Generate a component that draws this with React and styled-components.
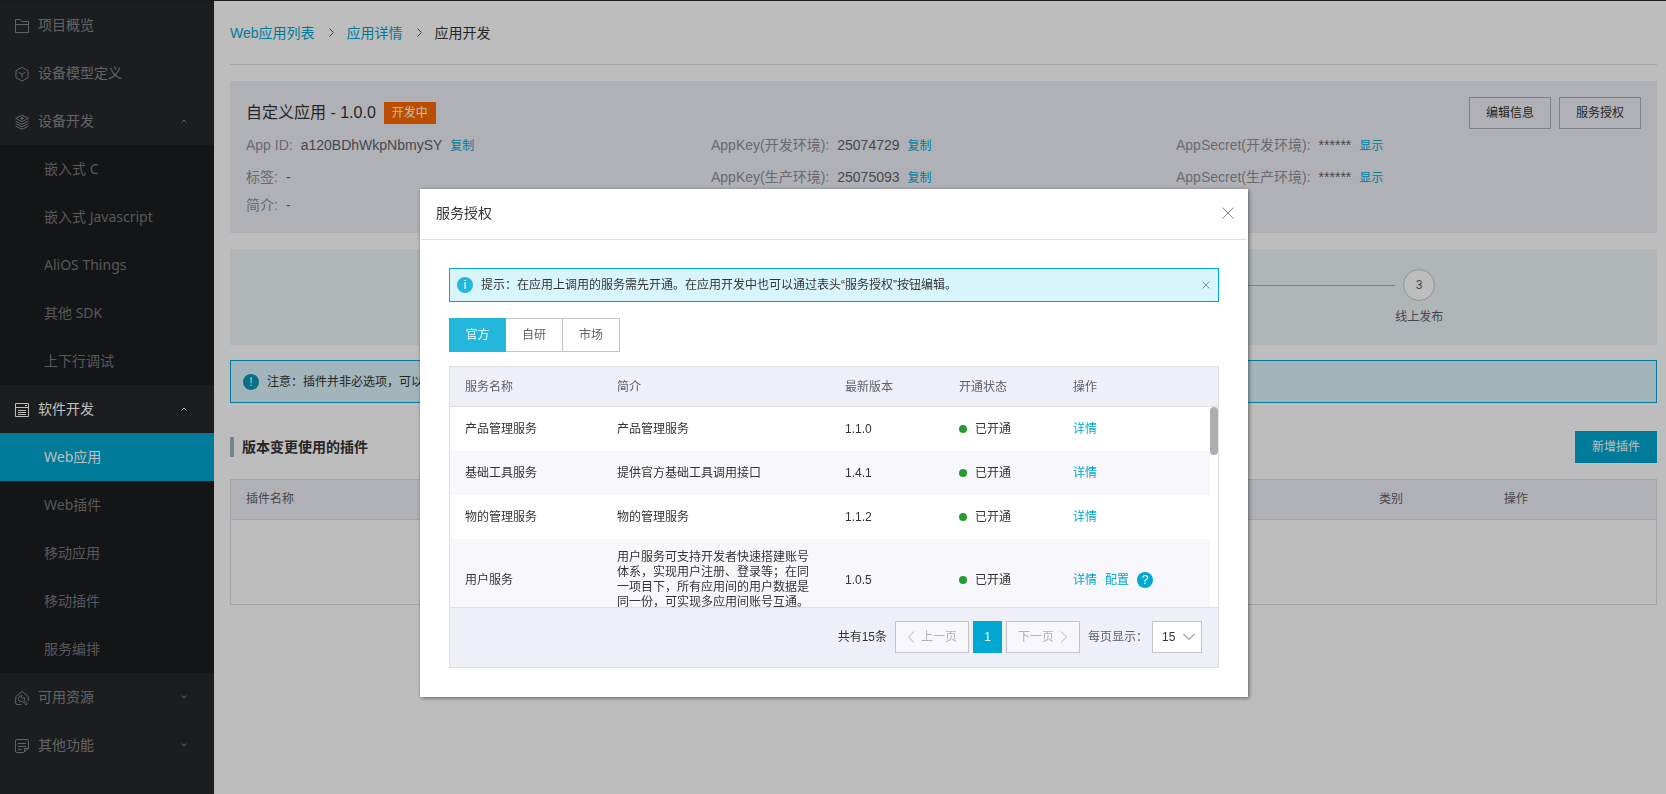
// react
import React, { useState } from 'react'

// 3rd party
import styled, { createGlobalStyle, css } from 'styled-components'

const color = {
  primary: '#00a7d0',
  text: '#333',
  sub: '#5f6166',
  label: '#8f9095',
  line: '#dedfe4',
  head: '#eeeff7'
}

const GlobalStyle = createGlobalStyle`
  *{
    box-sizing: border-box;
  }

  body{
    margin: 0;
    color: ${color.text};
    background: #fff;
    font: 12px/20px 'Liberation Sans', 'Noto Sans CJK SC', sans-serif;
  }

  button, select{
    font: inherit;
    cursor: pointer;
  }

  a{
    color: ${color.primary};
    text-decoration: none;
  }

  h1, h2, p, ul, ol, dl, dd{
    margin: 0;
    padding: 0;
    list-style: none;
  }
`

const Layout = styled.div`
  display: flex;
  min-height: 100vh;
  border-top: 1px solid #25212a;
`

/* sidebar */
const Sidebar = styled.nav`
  flex: 0 0 214px;
  background: #26282a;
  font-family: 'Noto Sans', 'Noto Sans CJK SC', sans-serif;
  font-size: 14px;
`

const navRow = css`
  display: flex;
  align-items: center;
  width: 100%;
  height: 48px;
  border: 0;
  text-align: left;
`

const MenuItem = styled.button`
  ${navRow}
  gap: 8px;
  padding: 0 27px 0 14px;
  background: transparent;
  color: ${p => (p.$open ? '#fff' : '#86888a')};

  span{
    flex: 1;
  }

  svg:first-child{
    margin-top: 2px;
  }
`

const SubMenu = styled.ul`
  background: #1c1d20;
`

const SubLink = styled.a`
  ${navRow}
  padding: 0 0 0 44px;
  color: ${p => (p.$active ? '#fff' : '#77787a')};
  background: ${p => (p.$active ? color.primary : 'transparent')};
`

/* page */
const Main = styled.main`
  flex: 1;
  min-width: 0;
  padding: 0 9px 16px 16px;
`

const Breadcrumb = styled.ol`
  display: flex;
  align-items: center;
  height: 64px;
  margin-bottom: 16px;
  border-bottom: 1px solid ${color.line};
  font-size: 14px;

  li{
    display: flex;
    align-items: center;
  }

  svg{
    margin: 0 13px 0 14px;
    color: #555;
  }
`

const InfoPanel = styled.section`
  margin-bottom: 16px;
  padding: 16px;
  background: ${color.head};
`

const InfoHead = styled.div`
  display: flex;
  align-items: center;
  gap: 8px;
  height: 32px;

  h1{
    font-size: 16px;
    font-weight: normal;
  }
`

const Tag = styled.span`
  margin-right: auto;
  padding: 0 8px;
  line-height: 22px;
  color: #fff;
  background: #ff6a00;
`

const Button = styled.button`
  height: 32px;
  padding: 0 16px;
  border: 1px solid ${p => (p.$primary ? color.primary : '#aeafb4')};
  color: ${p => (p.$primary ? '#fff' : color.text)};
  background: ${p => (p.$primary ? color.primary : 'transparent')};
`

const InfoGrid = styled.dl`
  display: grid;
  grid-template-columns: repeat(3, 1fr);
  grid-template-rows: 32px 32px 24px;
  align-items: center;
`

const InfoItem = styled.div`
  display: flex;
  gap: 8px;
  grid-column: ${p => p.$col};
  font-size: 14px;

  dt{
    color: ${color.label};
  }

  dd{
    color: ${color.sub};
  }

  a{
    font-size: 12px;
  }
`

const Steps = styled.ol`
  display: grid;
  grid-template-columns: repeat(3, 1fr);
  margin-bottom: 15px;
  padding: 20px 0 16px;
  background: #eef4f8;
`

const Step = styled.li`
  position: relative;
  display: flex;
  flex-direction: column;
  align-items: center;
  gap: 6px;
  height: 60px;
  color: ${color.sub};

  /* joins this step to the one before */
  & + &:before{
    content: '';
    position: absolute;
    top: 16px;
    left: calc(-50% + 24px);
    right: calc(50% + 24px);
    height: 1px;
    background: #aeb4b8;
  }
`

const StepDot = styled.span`
  width: 32px;
  height: 32px;
  border: 1px solid #c4c6ca;
  border-radius: 50%;
  line-height: 30px;
  text-align: center;
  background: #fff;
`

const Notice = styled.div`
  display: flex;
  align-items: center;
  gap: 8px;
  height: ${p => (p.$small ? 34 : 43)}px;
  padding: ${p => (p.$small ? '0 8px 0 7px' : '0 12px')};
  border: 1px solid ${color.primary};
  background: #d9f5fc;

  p{
    flex: 1;
  }
`

const Badge = styled.span`
  display: inline-block;
  width: 16px;
  height: 16px;
  border-radius: 50%;
  line-height: 16px;
  text-align: center;
  color: #fff;
  background: ${p => p.$bg || color.primary};
`

const SectionHead = styled.div`
  display: flex;
  align-items: center;
  justify-content: space-between;
  margin: 28px 0 16px;

  h2{
    padding-left: 8px;
    border-left: 4px solid #9db5bd;
    font-size: 14px;
  }
`

const Table = styled.table`
  width: 100%;
  table-layout: fixed;
  border-collapse: collapse;
  text-align: left;

  th{
    height: 39px;
    padding: 0 15px;
    font-weight: normal;
    color: ${color.sub};
  }

  td{
    height: 44px;
    padding: 11px 15px;
    line-height: 15px;
  }

  tbody tr:nth-child(even){
    background: #f7f7fc;
  }
`

const PluginTable = styled.div`
  border: 1px solid ${color.line};

  thead{
    background: ${color.head};
    border-bottom: 1px solid ${color.line};
  }

  td{
    height: 85px;
  }
`

/* dialog */
const Overlay = styled.div`
  position: fixed;
  inset: 0;
  display: flex;
  align-items: flex-start;
  justify-content: center;
  padding: 189px 8px 0 10px;
  background: rgba(0, 0, 0, .26);
`

const Dialog = styled.div`
  width: 828px;
  border: 1px solid #fff;
  background: #fff;
  box-shadow: 1px 1px 4px rgba(0, 0, 0, .5);
`

const DialogHead = styled.header`
  display: flex;
  align-items: center;
  justify-content: space-between;
  height: 50px;
  padding: 0 13px 4px 15px;
  border-bottom: 1px solid ${color.line};

  h2{
    font-size: 14px;
    font-weight: normal;
  }
`

const IconButton = styled.button`
  display: flex;
  padding: 0;
  border: 0;
  color: #888;
  background: transparent;
`

const DialogBody = styled.div`
  padding: 28px;
`

const Tabs = styled.div`
  display: flex;
  margin: 16px 0 14px;
`

const Tab = styled.button`
  width: 57px;
  height: 34px;
  padding: 0;
  border: 1px solid ${p => (p.$active ? '#23b7dc' : '#c3c4c8')};
  border-left-width: ${p => (p.$active ? 1 : 0)}px;
  color: ${p => (p.$active ? '#fff' : color.sub)};
  background: ${p => (p.$active ? '#23b7dc' : '#fff')};
`

const ServiceTable = styled.div`
  border: 1px solid ${color.line};
`

const TableHead = styled.div`
  padding-right: 8px;
  border-bottom: 1px solid ${color.line};
  background: ${color.head};
`

const TableBody = styled.div`
  display: flex;
  align-items: flex-start;
  height: 200px;
`

const ScrollArea = styled.div`
  flex: 1;
  height: 100%;
  overflow-y: auto;
  scrollbar-width: none;
`

const ScrollThumb = styled.div`
  width: 8px;
  height: 48px;
  border-radius: 4px;
  background: #aeaeae;
`

const Status = styled.span`
  display: flex;
  align-items: center;
  gap: 8px;

  &:before{
    content: '';
    width: 8px;
    height: 8px;
    border-radius: 50%;
    background: #259b31;
  }
`

const Actions = styled.div`
  display: flex;
  align-items: center;
  gap: 8px;
`

const Footer = styled.footer`
  display: flex;
  align-items: center;
  justify-content: flex-end;
  gap: 4px;
  height: 60px;
  padding: 0 16px 2px;
  border-top: 1px solid ${color.line};
  background: ${color.head};

  label{
    margin-left: 4px;
    color: ${color.sub};
  }
`

const Total = styled.span`
  margin-right: 4px;
`

const PageButton = styled.button`
  display: flex;
  align-items: center;
  justify-content: center;
  gap: 6px;
  width: ${p => (p.$current ? 29 : 74)}px;
  height: 32px;
  padding: 0;
  border: 1px solid ${p => (p.$current ? color.primary : '#c3c4c8')};
  color: ${p => (p.$current ? '#fff' : '#b2b3b8')};
  background: ${p => (p.$current ? color.primary : '#f7f7fc')};
`

const SelectBox = styled.div`
  position: relative;

  select{
    display: block;
    width: 50px;
    height: 32px;
    padding: 0 0 0 9px;
    border: 1px solid #c3c4c8;
    border-radius: 0;
    color: ${color.text};
    background: #fff;
    appearance: none;
  }

  svg{
    position: absolute;
    top: 12px;
    right: 7px;
    color: #666;
    pointer-events: none;
  }
`

const Icon = ({ w, h, children }) => (
  <svg width={w} height={h} viewBox={`0 0 ${w} ${h}`} fill="none" stroke="currentColor" aria-hidden="true">
    {children}
  </svg>
)

const Cross = ({ size }) => (
  <Icon w={size} h={size}>
    <path d={`M.5 .5L${size - 0.5} ${size - 0.5}M${size - 0.5} .5L.5 ${size - 0.5}`} />
  </Icon>
)

const menuIcons = {
  folder: <path d="M1.5 14.5v-13h4.600l1.600 2h6.800v11zM1.500 6.500h13" />,
  cube: <path d="M8 1.300l6 3.400v7L8 15.100l-6-3.400v-7zM4.600 6.200L8 8.200l3.400-2M8 8.200v3.600" />,
  layers: (
    <>
      <path d="M8 1.200l6.300 3.200L8 7.600 1.700 4.400z" />
      <path d="M8 3.600l1.600.8L8 5.200l-1.600-.8z" fill="currentColor" />
      <path d="M1.700 7.200L8 10.300l6.300-3.100M1.700 9.700L8 12.800l6.300-3.100M1.700 12.200L8 15.300l6.300-3.100" />
    </>
  ),
  panel: <path d="M1.500 1.500h13v13h-13zM1.500 5.500h13M11 3.500h2M4 8.500h8M4 10.500h8M4 12.500h8" />,
  wrench: (
    <>
      <path d="M7.500 14.500H3.200q-1.500 0-1.500-1.500V6.800L8 1.400l6.300 5.200V11" />
      <path d="M7.800 5.200l-.6 2 1.400 1.200 1.800-.8q.8 2-.5 3l3.300 2.800-1.200 1.400-3.500-3.300Q4.400 11.800 4.500 8.500q.4-2.600 3.300-3.300z" />
    </>
  ),
  note: <path d="M9.500 14.500H3q-1.500 0-1.500-1.500V3q0-1.500 1.500-1.500h10q1.500 0 1.500 1.500v7.500zM10.500 14v-3.500h4M4 5.500h8M4 8.500h8M4 11.500h3.500" />
}

const menus = [
  { title: '项目概览', icon: 'folder' },
  { title: '设备模型定义', icon: 'cube' },
  {
    title: '设备开发',
    icon: 'layers',
    children: ['嵌入式 C', '嵌入式 Javascript', 'AliOS Things', '其他 SDK', '上下行调试']
  },
  {
    title: '软件开发',
    icon: 'panel',
    open: true,
    children: ['Web应用', 'Web插件', '移动应用', '移动插件', '服务编排']
  },
  { title: '可用资源', icon: 'wrench', fold: true },
  { title: '其他功能', icon: 'note', fold: true }
]

const infos = [
  { col: 1, label: 'App ID:', value: 'a120BDhWkpNbmySY', action: '复制' },
  { col: 2, label: 'AppKey(开发环境):', value: '25074729', action: '复制' },
  { col: 3, label: 'AppSecret(开发环境):', value: '******', action: '显示' },
  { col: 1, label: '标签:', value: '-' },
  { col: 2, label: 'AppKey(生产环境):', value: '25075093', action: '复制' },
  { col: 3, label: 'AppSecret(生产环境):', value: '******', action: '显示' },
  { col: 1, label: '简介:', value: '-' }
]

const steps = ['', '', '线上发布']

const services = [
  { name: '产品管理服务', des: '产品管理服务', version: '1.1.0' },
  { name: '基础工具服务', des: '提供官方基础工具调用接口', version: '1.4.1' },
  { name: '物的管理服务', des: '物的管理服务', version: '1.1.2' },
  {
    name: '用户服务',
    des: '用户服务可支持开发者快速搭建账号体系，实现用户注册、登录等；在同一项目下，所有应用间的用户数据是同一份，可实现多应用间账号互通。',
    version: '1.0.5',
    config: true
  }
]

const ServiceCols = () => (
  <colgroup>
    <col width="20%" />
    <col width="30%" />
    <col width="15%" />
    <col width="15%" />
    <col width="20%" />
  </colgroup>
)

const SideMenu = () => (
  <Sidebar>
    {menus.map(item => (
      <div key={item.title}>
        <MenuItem $open={item.open}>
          <Icon w={16} h={16}>{menuIcons[item.icon]}</Icon>
          <span>{item.title}</span>
          {item.children && <Icon w={6} h={4}><path d="M.5 3.500L3 1l2.500 2.500" /></Icon>}
          {item.fold && <Icon w={6} h={4}><path d="M.5 .5L3 3l2.500-2.500" /></Icon>}
        </MenuItem>
        {item.children && (
          <SubMenu>
            {item.children.map(name => (
              <li key={name}>
                <SubLink href="#" $active={name === 'Web应用'}>{name}</SubLink>
              </li>
            ))}
          </SubMenu>
        )}
      </div>
    ))}
  </Sidebar>
)

const Crumb = ({ children, last }) => (
  <li>
    {last ? children : <a href="#">{children}</a>}
    {!last && <Icon w={5} h={9}><path d="M.5 .5l4 4-4 4" /></Icon>}
  </li>
)

const AppDetail = () => (
  <Main>
    <Breadcrumb>
      <Crumb>Web应用列表</Crumb>
      <Crumb>应用详情</Crumb>
      <Crumb last>应用开发</Crumb>
    </Breadcrumb>
    <InfoPanel>
      <InfoHead>
        <h1>自定义应用 - 1.0.0</h1>
        <Tag>开发中</Tag>
        <Button>编辑信息</Button>
        <Button>服务授权</Button>
      </InfoHead>
      <InfoGrid>
        {infos.map(item => (
          <InfoItem key={item.label} $col={item.col}>
            <dt>{item.label}</dt>
            <dd>{item.value}</dd>
            {item.action && <dd><a href="#">{item.action}</a></dd>}
          </InfoItem>
        ))}
      </InfoGrid>
    </InfoPanel>
    <Steps>
      {steps.map((title, i) => (
        <Step key={i}>
          <StepDot>{i + 1}</StepDot>
          {title}
        </Step>
      ))}
    </Steps>
    <Notice>
      <Badge $bg="#1096b6">!</Badge>
      <p>注意：插件并非必选项，可以</p>
    </Notice>
    <SectionHead>
      <h2>版本变更使用的插件</h2>
      <Button $primary>新增插件</Button>
    </SectionHead>
    <PluginTable>
      <Table>
        <colgroup>
          <col />
          <col width="125" />
          <col width="167" />
        </colgroup>
        <thead>
          <tr>
            <th>插件名称</th>
            <th>类别</th>
            <th>操作</th>
          </tr>
        </thead>
        <tbody>
          <tr><td colSpan={3} /></tr>
        </tbody>
      </Table>
    </PluginTable>
  </Main>
)

const AuthDialog = () => {
  const [tab, setTab] = useState('官方')

  return (
    <Overlay>
      <Dialog role="dialog" aria-labelledby="dialog-title">
        <DialogHead>
          <h2 id="dialog-title">服务授权</h2>
          <IconButton aria-label="关闭"><Cross size={12} /></IconButton>
        </DialogHead>
        <DialogBody>
          <Notice $small>
            <Badge $bg="#23b7dc">i</Badge>
            <p>提示：在应用上调用的服务需先开通。在应用开发中也可以通过表头“服务授权”按钮编辑。</p>
            <IconButton aria-label="关闭提示"><Cross size={8} /></IconButton>
          </Notice>
          <Tabs role="tablist">
            {['官方', '自研', '市场'].map(name => (
              <Tab
                key={name}
                role="tab"
                aria-selected={tab === name}
                $active={tab === name}
                onClick={() => setTab(name)}>
                {name}
              </Tab>
            ))}
          </Tabs>
          <ServiceTable>
            <TableHead>
              <Table>
                <ServiceCols />
                <thead>
                  <tr>
                    <th>服务名称</th>
                    <th>简介</th>
                    <th>最新版本</th>
                    <th>开通状态</th>
                    <th>操作</th>
                  </tr>
                </thead>
              </Table>
            </TableHead>
            <TableBody>
              <ScrollArea>
                <Table>
                  <ServiceCols />
                  <tbody>
                    {services.map(item => (
                      <tr key={item.name}>
                        <td>{item.name}</td>
                        <td>{item.des}</td>
                        <td>{item.version}</td>
                        <td><Status>已开通</Status></td>
                        <td>
                          <Actions>
                            <a href="#">详情</a>
                            {item.config && <a href="#">配置</a>}
                            {item.config && <Badge>?</Badge>}
                          </Actions>
                        </td>
                      </tr>
                    ))}
                  </tbody>
                </Table>
              </ScrollArea>
              <ScrollThumb />
            </TableBody>
            <Footer>
              <Total>共有15条</Total>
              <PageButton disabled>
                <Icon w={8} h={12}><path d="M7 .5L1.500 6 7 11.500" /></Icon>
                上一页
              </PageButton>
              <PageButton $current>1</PageButton>
              <PageButton disabled>
                下一页
                <Icon w={8} h={12}><path d="M1 .5L6.500 6 1 11.500" /></Icon>
              </PageButton>
              <label htmlFor="page-size">每页显示：</label>
              <SelectBox>
                <select id="page-size" defaultValue="15">
                  <option>15</option>
                </select>
                <Icon w={12} h={8}><path d="M.5 1L6 6.500 11.500 1" /></Icon>
              </SelectBox>
            </Footer>
          </ServiceTable>
        </DialogBody>
      </Dialog>
    </Overlay>
  )
}

const App = () => (
  <>
    <GlobalStyle />
    <Layout>
      <SideMenu />
      <AppDetail />
    </Layout>
    <AuthDialog />
  </>
)

export default App
